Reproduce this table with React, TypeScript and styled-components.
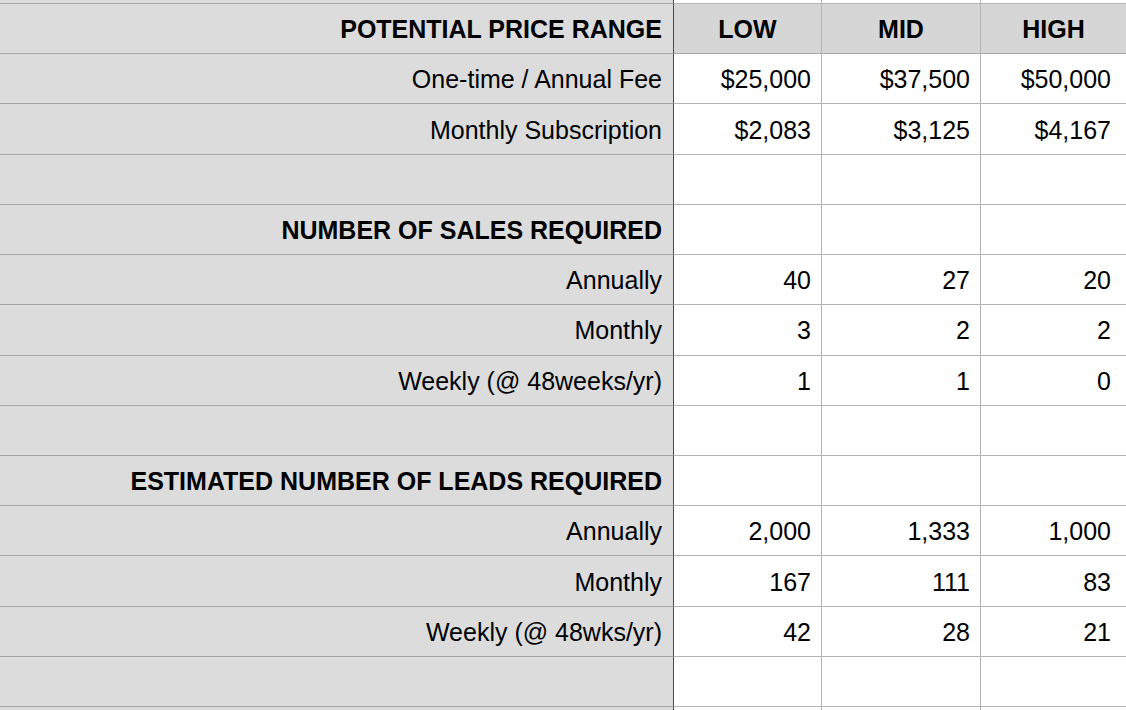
import React from "react";
import styled, { createGlobalStyle } from "styled-components";

const GlobalStyle = createGlobalStyle`
  html, body { margin: 0; padding: 0; background: #ffffff; }
  body { font-family: "Liberation Sans", Arial, Helvetica, sans-serif; overflow: hidden; }
`;

const Sheet = styled.div`
  width: 1126px;
  height: 710px;
  overflow: hidden;
  display: flex;
  flex-direction: column;
`;

const Row = styled.div<{ $h: number }>`
  display: grid;
  grid-template-columns: 674px 148px 159px 145px;
  height: ${(p) => p.$h}px;
  flex: none;
`;

const LabelCell = styled.div<{ $bold?: boolean }>`
  box-sizing: border-box;
  background: #dcdcdc;
  border-bottom: 1px solid #a6a6a6;
  border-right: 1px solid #4a4a4a;
  display: flex;
  align-items: center;
  justify-content: flex-end;
  padding: 2px 11px 0 0;
  font-size: 25px;
  font-weight: ${(p) => (p.$bold ? 700 : 400)};
  color: #000;
  white-space: nowrap;
`;

const DataCell = styled.div<{ $head?: boolean }>`
  box-sizing: border-box;
  background: ${(p) => (p.$head ? "#d6d6d6" : "#ffffff")};
  border-bottom: 1px solid ${(p) => (p.$head ? "#a6a6a6" : "#b4b4b4")};
  border-right: 1px solid #b4b4b4;
  display: flex;
  align-items: center;
  justify-content: ${(p) => (p.$head ? "center" : "flex-end")};
  padding: 2px 10px 0 0;
  padding-left: ${(p) => (p.$head ? "10px" : "0")};
  font-size: 25px;
  font-weight: ${(p) => (p.$head ? 700 : 400)};
  color: #000;
  white-space: nowrap;
  &:last-child {
    border-right: none;
    padding-right: ${(p) => (p.$head ? "10px" : "15px")};
  }
`;

type R = { label: string; bold?: boolean; head?: boolean; values: string[] };

const rows: R[] = [
  { label: "POTENTIAL PRICE RANGE", bold: true, head: true, values: ["LOW", "MID", "HIGH"] },
  { label: "One-time / Annual Fee", values: ["$25,000", "$37,500", "$50,000"] },
  { label: "Monthly Subscription", values: ["$2,083", "$3,125", "$4,167"] },
  { label: "", values: ["", "", ""] },
  { label: "NUMBER OF SALES REQUIRED", bold: true, values: ["", "", ""] },
  { label: "Annually", values: ["40", "27", "20"] },
  { label: "Monthly", values: ["3", "2", "2"] },
  { label: "Weekly (@ 48weeks/yr)", values: ["1", "1", "0"] },
  { label: "", values: ["", "", ""] },
  { label: "ESTIMATED NUMBER OF LEADS REQUIRED", bold: true, values: ["", "", ""] },
  { label: "Annually", values: ["2,000", "1,333", "1,000"] },
  { label: "Monthly", values: ["167", "111", "83"] },
  { label: "Weekly (@ 48wks/yr)", values: ["42", "28", "21"] },
  { label: "", values: ["", "", ""] },
];

const PITCH = 50.23;

export default function App() {
  return (
    <>
      <GlobalStyle />
      <Sheet>
        <Row $h={4}>
          <LabelCell />
          <DataCell />
          <DataCell />
          <DataCell />
        </Row>
        {rows.map((r, i) => (
          <Row key={i} $h={PITCH}>
            <LabelCell $bold={r.bold}>{r.label}</LabelCell>
            {r.values.map((v, j) => (
              <DataCell key={j} $head={r.head}>
                {v}
              </DataCell>
            ))}
          </Row>
        ))}
        <Row $h={20}>
          <LabelCell />
          <DataCell />
          <DataCell />
          <DataCell />
        </Row>
      </Sheet>
    </>
  );
}
